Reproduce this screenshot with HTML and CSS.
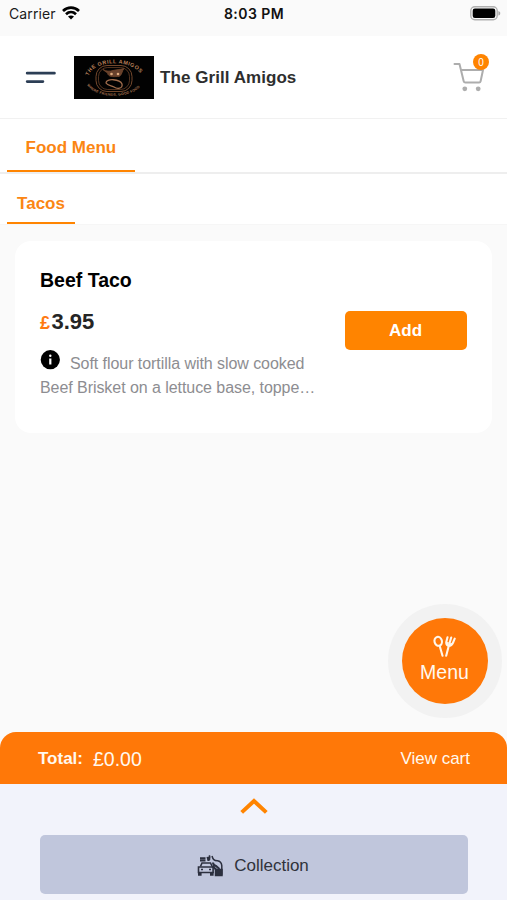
FILE: index.html
```html
<!DOCTYPE html>
<html lang="en">
<head>
<meta charset="utf-8">
<title>The Grill Amigos</title>
<link rel="stylesheet" href="styles.css">
</head>
<body>
<div class="app">
  <div class="status">
    <div class="carrier"><span>Carrier</span>
      <svg width="18" height="14" viewBox="0 0 18 14" fill="none" stroke="#000" stroke-width="2.7"><path d="M1 5C5.6.6 12.4.6 17 5M4 8.2c2.9-2.7 7.1-2.7 10 0"/><path d="M9 13.6 6 10.5c1.7-1.5 4.3-1.5 6 0z" fill="#000" stroke="none"/></svg>
    </div>
    <div class="clock">8:03 PM</div>
    <svg class="battery" width="31" height="15" viewBox="0 0 31 15"><rect x=".8" y=".8" width="26.4" height="12.9" rx="4" fill="#fafafa" stroke="#b0b0b0" stroke-width="1.4"/><rect x="2.7" y="2.6" width="22.6" height="9.3" rx="2.2"/><path d="M28.4 5c2.5.8 2.5 3.8 0 4.6z" fill="#a8a8a8"/></svg>
  </div>
  <header class="header">
    <svg class="burger" width="31" height="13" viewBox="0 0 31 13" stroke="#2c3e55" stroke-width="2.8" stroke-linecap="round"><path d="M2.2 2.200h27.200M2.200 10.600h15.700"/></svg>
    <svg class="logo" width="80" height="43" viewBox="0 0 80 43">
      <defs><path id="arc-top" d="M14.500 20C20 3 60 3 68 20"/><path id="arc-bottom" d="M13 29C22 43.500 58 43.500 68 28.500"/></defs>
      <rect width="80" height="43" fill="#020202"/>
      <g fill="none" stroke="#74482c">
        <rect x="22" y="9.500" width="36" height="26" rx="11" stroke-width="1"/>
        <rect x="24.500" y="11.500" width="31" height="22" rx="9" stroke-width=".7"/>
        <path d="M29 13.500c3 2 7 2 10 1 4-1 8-1 11-2-2 2-2 7-5 8-4 0-9 1-11-2 0-2-2-2-5-5z" fill="#68412c" stroke-width=".8"/>
        <path d="M32 27c0-5 14-4 16 1 1 5-5 5-8 3-3-2-6-1-8-4z" stroke="#a16d4c" stroke-width="1.300"/>
      </g>
      <g fill="#e0ad80"><circle cx="37.500" cy="18" r="1.300"/><circle cx="44" cy="18" r="1.300"/></g>
      <text class="logo-name"><textPath href="#arc-top" textLength="59">THE GRILL AMIGOS</textPath></text>
      <text class="logo-tag"><textPath href="#arc-bottom" textLength="58">WHERE FRIENDS, GOOD FOOD</textPath></text>
    </svg>
    <h1 class="brand">The Grill Amigos</h1>
    <div class="cart">
      <svg width="32" height="30" viewBox="0 0 32 30" fill="none" stroke="#adadad" stroke-width="2" stroke-linecap="round" stroke-linejoin="round"><path d="M1.500 2h5l4.200 17.200q.3 1.300 1.700 1.300h13.700q1.200 0 1.500-1.300L30 8H8.200"/><circle cx="11.800" cy="26.800" r="2.400" fill="#adadad" stroke="none"/><circle cx="25.200" cy="26.800" r="2.400" fill="#adadad" stroke="none"/></svg>
      <span class="badge">0</span>
    </div>
  </header>
  <nav class="tabs"><a class="tab">Food Menu</a></nav>
  <nav class="subtabs"><a class="subtab">Tacos</a></nav>
  <main class="content">
    <article class="card">
      <div class="item">
        <h2 class="name">Beef Taco</h2>
        <div class="price"><span class="pound">£</span>3.95</div>
        <p class="desc"><svg class="info" width="20" height="20" viewBox="0 0 20 20"><circle cx="10.300" cy="9.700" r="9.600"/><path d="M10.300 8.500v6" fill="none" stroke="#fff" stroke-width="2.200"/><circle cx="10.300" cy="5.700" r="1.200" fill="#fff"/></svg>Soft flour tortilla with slow cooked<br>Beef Brisket on a lettuce base, toppe…</p>
      </div>
      <button class="add">Add</button>
    </article>
  </main>
  <footer class="footer">
    <div class="total"><b>Total:</b><span class="amount">£0.00</span><span class="view">View cart</span></div>
    <div class="panel">
      <svg class="chevron" width="28" height="16" viewBox="0 0 28 16" fill="none" stroke="#ff8400" stroke-width="4"><path d="M1.700 14.400 14 3l12.300 11.400"/></svg>
      <button class="collection">
        <svg width="26" height="22" viewBox="0 0 26 22" fill="none" stroke="#2c303f" stroke-width="1.500"><path d="M3.500 11.500 5 8h8.500l1.700 3.500" stroke-width="1.600"/><path d="M1.500 12h14.600v5.500H1.500z" stroke-width="1.600"/><path d="M1 17h3.600v3.800H1zM13 17h3.600v3.800H13z" fill="#2c303f" stroke="none"/><path d="M4 14.500h2m6 0h2" stroke-width="1.600"/><path d="M3 3.200h5.500M3 5.600h5.500" stroke-width="2"/><path d="m9.500 2 4-.5-1 4.500h-2z" fill="#2c303f" stroke="none"/><path d="M12.500 5V.3M15 1c1 3.500 2 4.500 5.500 4.700 3 .3 4 2.300 4.300 5v9"/><path d="M18.500 14.500h6.500v6h-6.500z" fill="#2c303f"/><path d="M16 7.500c0 2 1.500 3 3 3.500l3.500 3M15.500 11l4 4" stroke-width="2"/></svg>
        <span>Collection</span>
      </button>
    </div>
  </footer>
  <button class="fab"><span class="fab-disc">
    <svg width="23" height="24" viewBox="0 0 23 24" fill="none" stroke="#fff6ea" stroke-width="2.100" stroke-linecap="round" stroke-linejoin="round"><ellipse cx="5.200" cy="6.300" rx="3.700" ry="4.500" transform="rotate(-15 5.200 6.300)"/><path d="M6.700 11 9.500 20.800M14.500 2.200 13.300 7q-.4 3 2.300 4 3.200 0 4.300-3l1.800-4.300M18.200 2.500 16.500 8.200M15.600 11.500 13.200 20.800"/><path d="m14.800 8-.2 2 1.800.4 1.900-1.500" stroke-width="2"/></svg>
    <span>Menu</span></span>
  </button>
</div>
</body>
</html>
```

FILE: styles.css
```css
* { box-sizing: border-box; margin: 0; padding: 0; }
body { font-family: "Liberation Sans", Arial, sans-serif; background: #fafafa; }
button { border: 0; font-family: inherit; }
svg { display: block; flex: none; }
.app { position: relative; width: 507px; height: 900px; display: flex; flex-direction: column; overflow: hidden; background: #fafafa; }
.status { height: 36px; display: grid; grid-template-columns: 1fr auto 1fr; align-items: start; padding: 5px 6px 0 9px; font-family: Inter, sans-serif; color: #1b1b1b; }
.carrier { display: flex; gap: 6px; font-size: 14px; line-height: 18px; letter-spacing: .1px; }
.carrier svg { margin-top: 1px; }
.clock { margin-left: -2px; font-size: 14px; font-weight: 600; line-height: 18px; letter-spacing: .45px; color: #111; }
.battery { justify-self: end; margin-top: 1px; }
.header { height: 83px; display: flex; align-items: center; padding: 0 22px 0 25px; background: #fff; border-bottom: 1px solid #f1f1f1; }
.logo { margin-left: 18px; }
.logo-name { font-size: 5.4px; font-weight: bold; fill: #b98059; }
.logo-tag { font-size: 3.5px; font-weight: bold; fill: #a87351; }
.brand { flex: 1; margin-left: 6px; padding-top: 2px; font-size: 17px; line-height: 24px; letter-spacing: .06px; color: #2e2e2e; }
.cart { position: relative; width: 32px; height: 30px; }
.badge { position: absolute; top: -8px; right: -4px; width: 16px; height: 16px; border-radius: 50%; background: #ff8400; color: #fff; font-size: 10px; line-height: 17px; text-align: center; }
.tabs { height: 55px; display: flex; padding: 0 7px; background: #fff; border-bottom: 2px solid #eee; }
.tab { height: 53px; padding: 0 18.5px; border-bottom: 2px solid #ff8400; color: #fb8613; font-size: 17px; font-weight: bold; line-height: 57px; }
.subtabs { height: 51px; display: flex; padding: 0 7px; background: #fff; border-bottom: 1px solid #f6f6f6; }
.subtab { height: 50px; width: 68px; text-align: center; border-bottom: 2px solid #ff8400; color: #fb8613; font-size: 17px; font-weight: bold; line-height: 60px; }
.content { flex: 1; padding: 16px 15px; }
.card { height: 192px; display: flex; justify-content: space-between; padding: 26px 25.5px 0 25px; border-radius: 16px; background: #fff; }
.name { font-size: 19.5px; line-height: 26px; color: #000; }
.price { margin-top: 14px; font-size: 22px; line-height: 30px; font-weight: bold; color: #252525; }
.pound { margin-right: 1.5px; font-size: 18px; color: #ff7a12; }
.desc { margin-top: 14px; font-size: 16px; line-height: 24.4px; letter-spacing: -.06px; color: #8d8d91; white-space: nowrap; }
.info { display: inline-block; margin: -5px 10px 0 0; vertical-align: -1px; }
.add { width: 122px; height: 39px; margin-top: 44px; border-radius: 5px; background: #ff8400; color: #fff; font-size: 17px; font-weight: bold; }
.footer { height: 168px; border-radius: 16px 16px 0 0; background: #f2f3fb; }
.total { height: 52px; display: flex; align-items: center; padding: 2px 37px 0 38px; border-radius: 16px 16px 0 0; background: #ff7808; color: #fff8ef; font-size: 17px; }
.amount { margin-left: 10px; font-size: 19.5px; }
.view { margin-left: auto; }
.panel { height: 116px; display: flex; flex-direction: column; align-items: center; padding-top: 14px; }
.collection { width: 428px; height: 59px; margin-top: 21px; display: flex; align-items: center; justify-content: center; gap: 11px; padding: 2px 1px 0 0; border-radius: 5px; background: #c0c6dc; color: #30333b; font-size: 17px; }
.fab { position: absolute; left: 387.5px; top: 604px; width: 114px; height: 114px; display: flex; align-items: center; justify-content: center; border-radius: 50%; background: #f2f2f2; }
.fab-disc { width: 86px; height: 86px; display: flex; flex-direction: column; align-items: center; padding-top: 17px; border-radius: 50%; background: #ff7808; color: #fff8ef; font-size: 19.5px; line-height: 26px; }
```
